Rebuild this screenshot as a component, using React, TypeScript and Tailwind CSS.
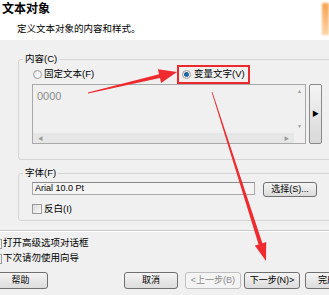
import React from "react";

const font = { fontFamily: '"Liberation Sans", "Noto Sans CJK SC", sans-serif' };

function Radio({ checked }: { checked?: boolean }) {
    return (
        <span className="w-[9px] h-[9px] rounded-full border border-[#9a9a9a] bg-gradient-to-br from-[#e6e6e6] to-[#ffffff] flex items-center justify-center shrink-0">
            {checked && <span className="w-[5px] h-[5px] rounded-full bg-[#1d6fb8] border border-[#0e4c85]" />}
        </span>
    );
}

function Check() {
    return <span className="w-[10px] h-[10px] border border-[#9a9a9a] bg-gradient-to-br from-[#dcdcdc] to-[#f8f8f8] shrink-0" />;
}

function Btn({ label, w, disabled }: { label: string; w: string; disabled?: boolean }) {
    return (
        <div
            className={`${w} h-[17px] shrink-0 rounded-[3px] border flex items-center justify-center text-[9px] leading-none ${
                disabled
                    ? "border-[#bfbfbf] bg-[#f4f4f4] text-[#8a8a8a]"
                    : "border-[#707070] bg-gradient-to-b from-[#f4f4f4] to-[#dcdcdc] text-black"
            }`}
        >
            {label}
        </div>
    );
}

export default function App() {
    return (
        <div className="relative w-[329px] h-[295px] overflow-hidden bg-[#f0f0f0] text-black" style={font}>
            {/* header */}
            <div className="relative h-[40px] bg-white">
                <div className="pl-[2px] pt-[2px] text-[12px] font-bold leading-[14px]">文本对象</div>
                <div className="pl-[17px] mt-[7px] text-[9.5px] leading-[11px]">定义文本对象的内容和样式。</div>
                <div className="absolute right-0 top-[3px] w-[7px] h-[32px] bg-gradient-to-b from-[#f7a24c] to-[#fbd3a5] blur-[1px]" />
            </div>

            <div className="pt-[13px]">
                {/* content group */}
                <fieldset className="ml-[18px] w-[330px] h-[107px] border border-[#d5d5d5] rounded-[3px]">
                    <legend className="ml-[4px] px-[2px] text-[9.5px] leading-[12px]">内容(C)</legend>
                    <div className="flex items-center h-[19px] pl-[14px]">
                        <div className="flex items-center gap-[2px] w-[144px] text-[9.5px]">
                            <Radio />
                            <span>固定文本(F)</span>
                        </div>
                        <div className="flex items-center gap-[3px] h-[19px] px-[3px] border-2 border-[#ec2a2e] text-[9.5px]">
                            <Radio checked />
                            <span>变量文字(V)</span>
                        </div>
                    </div>
                    <div className="flex ml-[13px] gap-[3px]">
                        <div className="w-[274px] h-[60px] border border-[#a8a8a8] flex flex-col">
                            <div className="flex flex-1">
                                <div className="flex-1 pl-[4px] pt-[3px] text-[11px] text-[#8c8c8c]">0000</div>
                                <div className="w-[11px] flex flex-col justify-between items-center py-[4px] text-[#9a9a9a] text-[5px] leading-none">
                                    <span>▲</span>
                                    <span>▼</span>
                                </div>
                            </div>
                            <div className="h-[10px] mr-[11px] bg-[#e6e6e6] flex items-center justify-between px-[5px] text-[#9a9a9a] text-[5px] leading-none">
                                <span>◀</span>
                                <span>▶</span>
                            </div>
                        </div>
                        <div className="w-[13px] h-[60px] rounded-[2px] border border-[#8a8a8a] bg-gradient-to-b from-[#f4f4f4] to-[#d8d8d8] flex items-center justify-center text-[7px]">
                            ▶
                        </div>
                    </div>
                </fieldset>

                {/* font group */}
                <fieldset className="ml-[18px] mt-[7px] w-[330px] h-[54px] border border-[#d5d5d5] rounded-[3px]">
                    <legend className="ml-[4px] px-[2px] text-[9.5px] leading-[12px]">字体(F)</legend>
                    <div className="flex items-start ml-[13px] mt-[3px]">
                        <div className="w-[223px] h-[13px] border border-[#a8a8a8] border-t-[#8a8a8a] bg-[#f4f4f4] pl-[2px] text-[9px] leading-[11px]">
                            Arial 10.0 Pt
                        </div>
                        <div className="ml-[8px] w-[54px] h-[15px] rounded-[3px] border border-[#707070] bg-gradient-to-b from-[#f4f4f4] to-[#dcdcdc] flex items-center justify-center text-[9px] leading-none">
                            选择(S)...
                        </div>
                    </div>
                    <div className="flex items-center gap-[2px] ml-[13px] mt-[5px] text-[9.5px]">
                        <Check />
                        <span>反白(I)</span>
                    </div>
                </fieldset>

                <div className="mt-[9px] border-t border-[#c8c8c8] border-b border-b-white" />

                <div className="flex items-center gap-[1px] -ml-[8px] mt-[4px] h-[15px] text-[9.5px]">
                    <Check />
                    <span>打开高级选项对话框</span>
                </div>
                <div className="flex items-center gap-[1px] -ml-[8px] h-[15px] text-[9.5px]">
                    <Check />
                    <span>下次请勿使用向导</span>
                </div>

                <div className="flex mt-[6px] -ml-[7px]">
                    <Btn label="帮助" w="w-[55px]" />
                    <div className="ml-[76px]">
                        <Btn label="取消" w="w-[54px]" />
                    </div>
                    <div className="ml-[7px]">
                        <Btn label="<上一步(B)" w="w-[56px]" disabled />
                    </div>
                    <div className="ml-[3px]">
                        <Btn label="下一步(N)>" w="w-[56px]" />
                    </div>
                    <div className="ml-[5px]">
                        <Btn label="完成" w="w-[44px]" />
                    </div>
                </div>
            </div>

            {/* red annotation arrows */}
            <svg className="absolute inset-0 pointer-events-none" width="329" height="295" viewBox="0 0 329 295">
                <polygon
                    fill="#ef2b2f"
                    points="87.9,92.5 159,74.2 157.9,69.3 177,72 161.1,82.9 160,78 88.1,93.5"
                />
                <polygon
                    fill="#ef2b2f"
                    points="211.6,92.1 258.6,244.4 254.8,245.6 266,261 266.2,242 262.4,243.2 212.4,91.9"
                />
            </svg>
        </div>
    );
}
